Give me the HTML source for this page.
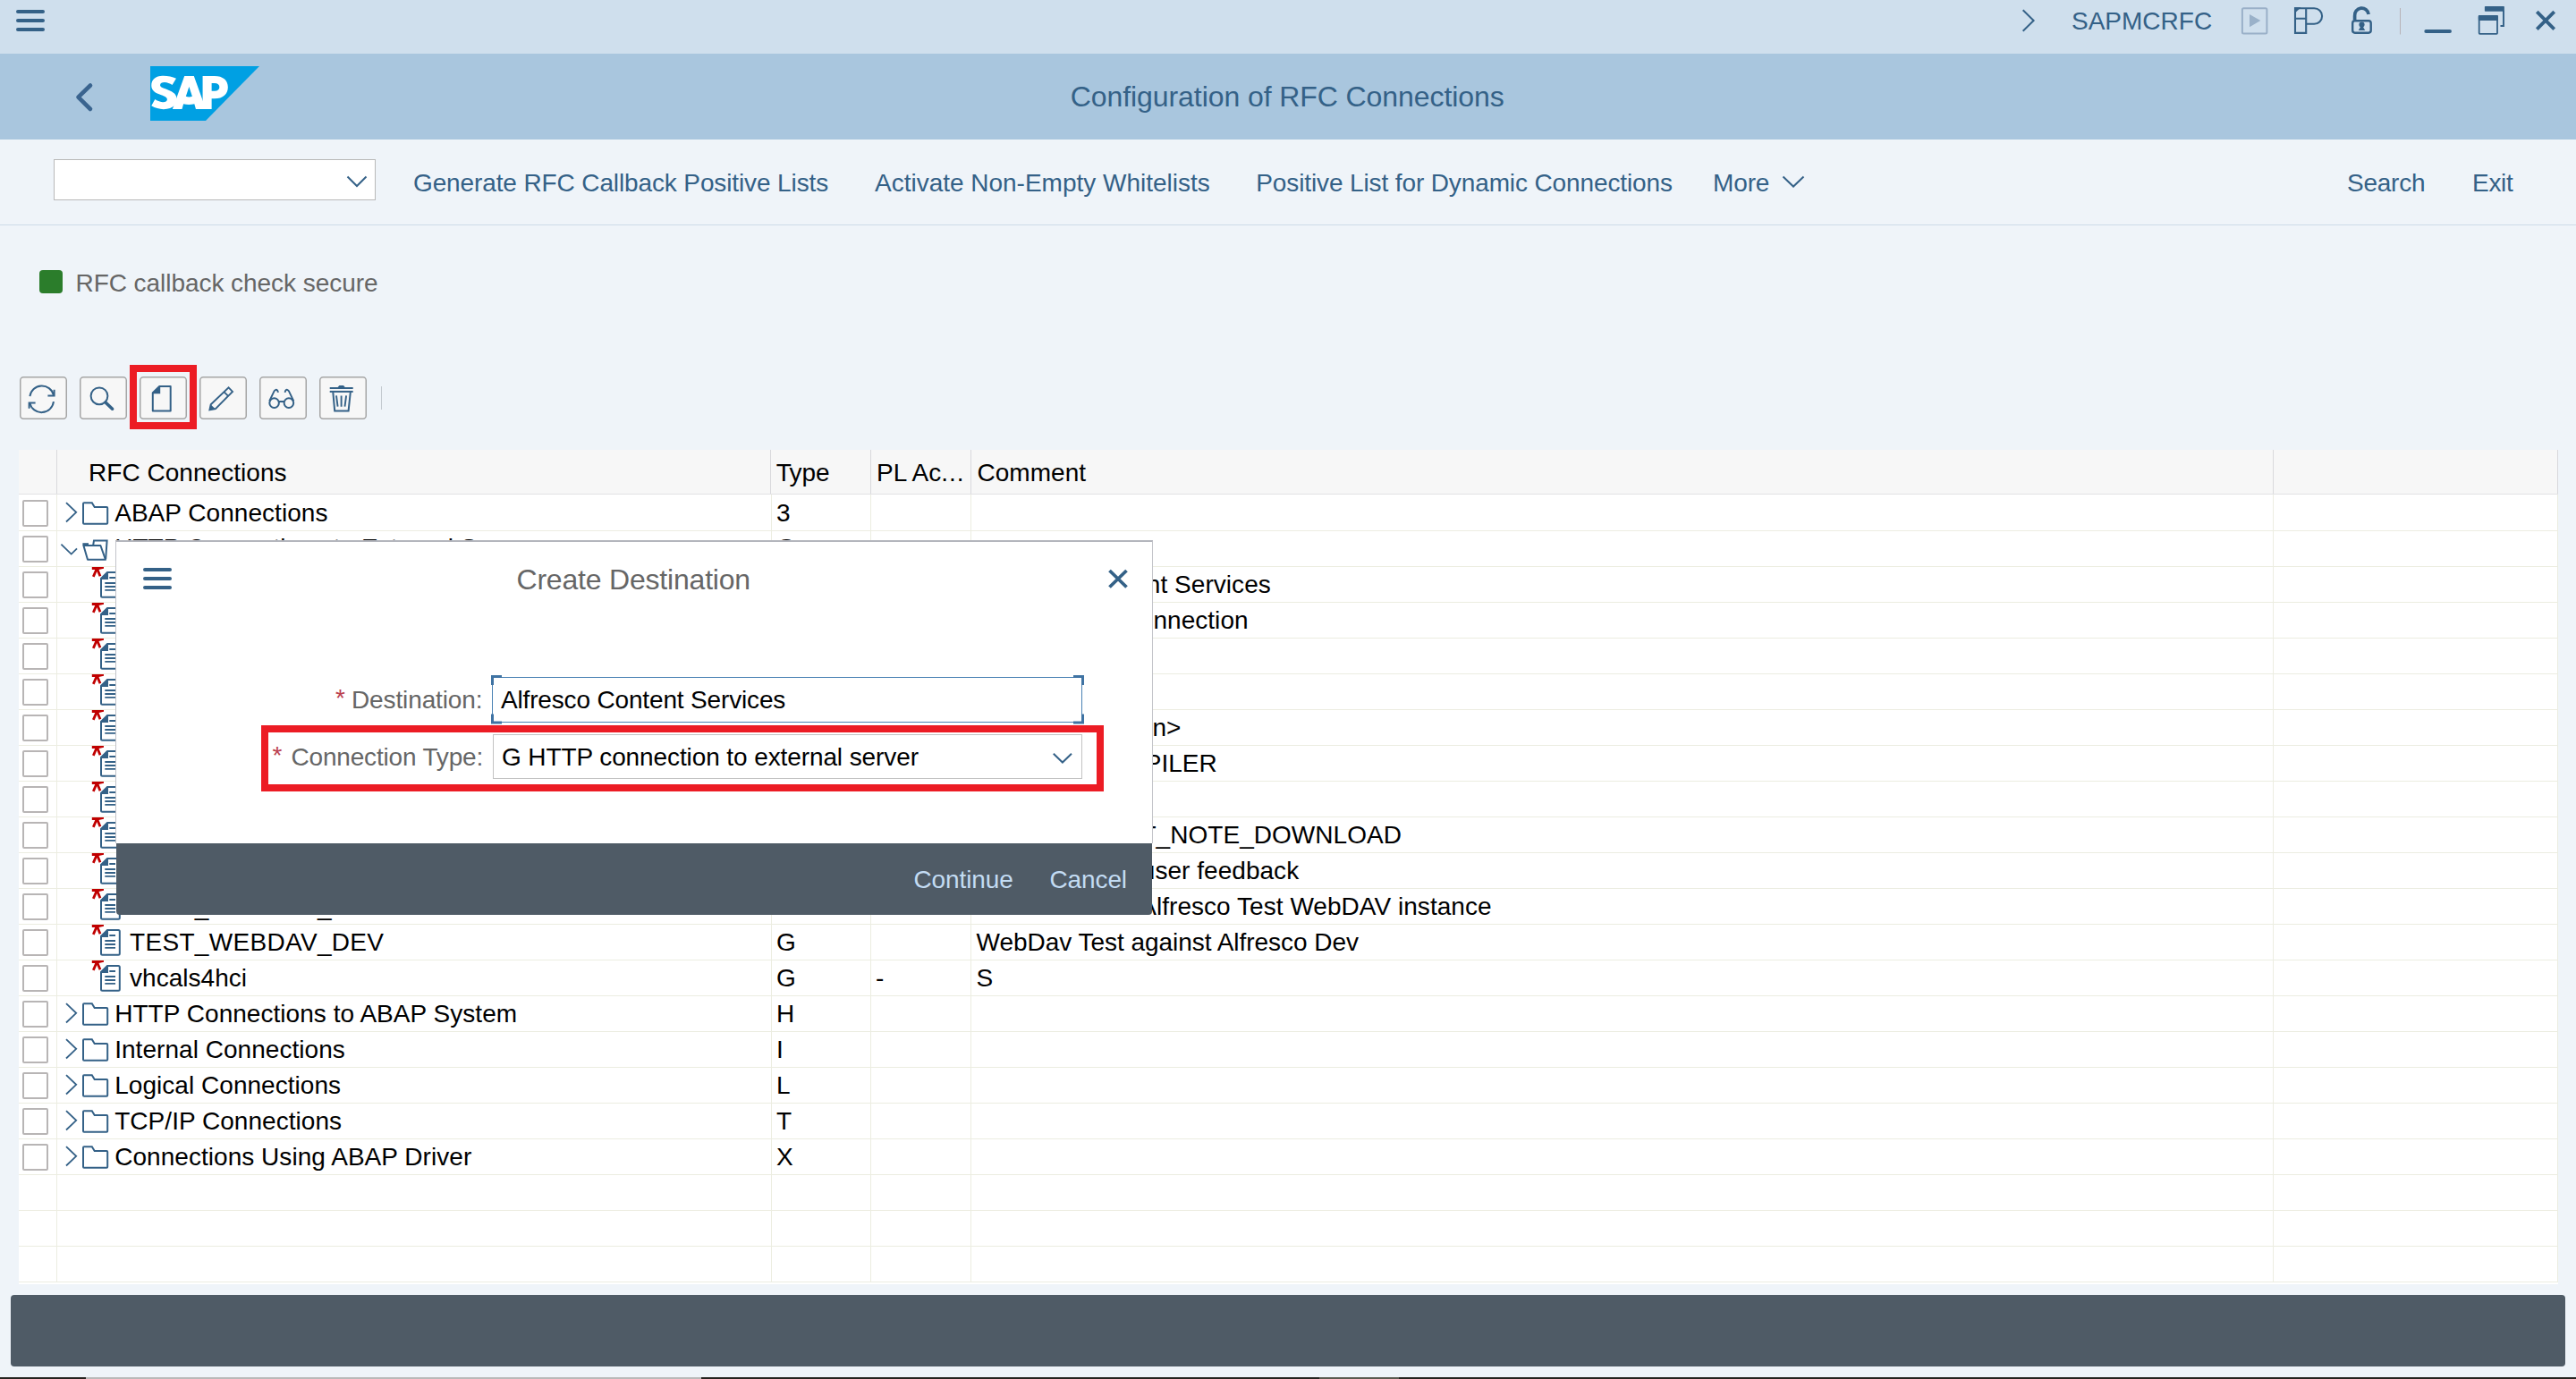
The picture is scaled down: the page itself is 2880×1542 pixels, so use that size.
<!DOCTYPE html>
<html><head><meta charset="utf-8"><title>Configuration of RFC Connections</title>
<style>
html,body{margin:0;padding:0}
body{width:2880px;height:1542px;position:relative;overflow:hidden;background:#eff4f9;font-family:"Liberation Sans",sans-serif}
.a{position:absolute}
.t{position:absolute;white-space:pre;line-height:1;font-family:"Liberation Sans",sans-serif}
svg{position:absolute;overflow:visible}
.btn{position:absolute;top:421px;width:50px;height:45px;border:1.5px solid #a8a8a8;border-radius:4px;background:#f7f7f7;box-sizing:content-box}
.cb{position:absolute;left:25px;width:25px;height:26px;border:2px solid #b8b5b5;border-radius:2px;background:#fff}
.hl{position:absolute;left:21px;width:2839px;height:1px;background:#ecede1}
.vl{position:absolute;top:553px;width:1px;height:881px;background:#ecede1}
.hvl{position:absolute;top:503px;width:1px;height:49px;background:#d9d9dc}
</style></head><body>

<div class="a" style="left:0;top:0;width:2880px;height:60px;background:#cfdfed"></div>
<div class="a" style="left:18px;top:11px;width:32px;height:4px;border-radius:2px;background:#346187"></div>
<div class="a" style="left:18px;top:21px;width:32px;height:4px;border-radius:2px;background:#346187"></div>
<div class="a" style="left:18px;top:31px;width:32px;height:4px;border-radius:2px;background:#346187"></div>
<div class="a" style="left:0;top:60px;width:2880px;height:96px;background:#a9c6de"></div>
<svg style="left:0;top:0" width="2880" height="160"><polyline points="101,95.5 87.5,108.7 101,122" fill="none" stroke="#3a648f" stroke-width="4.6" stroke-linecap="round" stroke-linejoin="round"/><polygon points="168,74 290,74 230,135 168,135" fill="#00a0e3"/><g transform="translate(160,70) scale(0.054348)" fill="#fff" fill-rule="evenodd"><path d="M680,325 C600,290 500,270 400,272 C260,275 170,350 170,470 C170,570 240,620 340,655 C430,690 495,710 495,760 C495,800 450,815 400,812 C340,808 290,785 245,755 L170,890 C250,935 330,960 420,960 C520,960 600,930 650,870 C690,820 700,750 680,690 C660,630 590,590 500,555 C420,525 350,510 350,465 C350,425 390,405 440,405 C500,405 550,430 600,460 Z"/><path d="M850,275 L1045,275 L1290,955 L1085,955 L1055,850 Q940,875 830,850 L800,955 L605,955 Z M945,495 L1010,695 Q945,725 880,695 Z"/><path d="M1225,275 H1470 C1640,275 1745,360 1745,505 C1745,650 1640,740 1470,740 H1410 V955 H1225 Z M1410,425 H1470 C1535,425 1570,455 1570,503 C1570,555 1535,585 1470,585 H1410 Z"/></g></svg>
<div class="t" style="left:1196.8px;top:91.51px;font-size:32px;color:#346187;letter-spacing:-0.08px;">Configuration of RFC Connections</div>
<div class="t" style="left:2316px;top:10.00px;font-size:28px;color:#346187;letter-spacing:0px;">SAPMCRFC</div>
<svg style="left:0;top:0" width="2880" height="60" fill="none" stroke="#346187">
<polyline points="2261.7,11.3 2273.6,23 2261.7,34.8" stroke-width="2"/>
<rect x="2506.9" y="9.2" width="27.5" height="28.2" rx="1.5" stroke="#9ab0c8" stroke-width="2"/>
<polygon points="2515,15.9 2527.3,23.1 2515,30.3" fill="#9ab1c9" stroke="none"/>
<path d="M2566,9.2 H2587.3 A8.8,8.8 0 0 1 2587.3,26.8 H2578.2 V36.9 H2566 Z M2578.2,9.2 V26.8 M2566,20.8 H2578.2" stroke-width="2.1"/>
<polygon points="2565,8.2 2572.6,8.2 2565,15.3" fill="#346187" stroke="none"/>
<rect x="2630.2" y="23.3" width="20.5" height="13.4" rx="2.6" stroke-width="2.4"/>
<path d="M2632.6,22.6 V17.8 A7.8,7.8 0 0 1 2648.1,16" stroke-width="3.7"/>
<circle cx="2640.5" cy="27.6" r="3.1" fill="#346187" stroke="none"/><polygon points="2639.6,29 2641.4,29 2644.2,33.9 2636.8,33.9" fill="#346187" stroke="none"/>
<line x1="2683.5" y1="9" x2="2683.5" y2="38.5" stroke="#b7b2b6" stroke-width="1"/>
<line x1="2712.3" y1="35" x2="2739" y2="35" stroke-width="3.9" stroke-linecap="round"/>
<rect x="2771.7" y="18" width="20.3" height="19.8" rx="0.8" stroke-width="1.8"/><rect x="2770.8" y="17.1" width="22.1" height="5.8" rx="0.8" fill="#346187" stroke="none"/>
<rect x="2777.9" y="7" width="22" height="5.7" rx="0.8" fill="#346187" stroke="none"/><path d="M2799,12 V29 H2795.5" stroke-width="1.9"/>
<path d="M2836.3,13.2 L2855.7,32.7 M2855.7,13.2 L2836.3,32.7" stroke-width="3.8"/>
</svg>
<div class="a" style="left:0;top:251px;width:2880px;height:1px;background:#cddbe9"></div>
<div class="a" style="left:60px;top:178px;width:358px;height:44px;border:1.5px solid #b9b9b9;background:#fff"></div>
<svg style="left:0;top:0" width="2880" height="260" fill="none" stroke="#346187" stroke-width="2"><polyline points="388.5,197.5 399,208 409.5,197.5"/><polyline points="1993.5,197.5 2005,208.5 2016.5,197.5"/></svg>
<div class="t" style="left:462px;top:191.00px;font-size:28px;color:#346187;letter-spacing:-0.12px;">Generate RFC Callback Positive Lists</div>
<div class="t" style="left:978px;top:191.00px;font-size:28px;color:#346187;letter-spacing:-0.01px;">Activate Non-Empty Whitelists</div>
<div class="t" style="left:1404.3px;top:191.00px;font-size:28px;color:#346187;letter-spacing:-0.12px;">Positive List for Dynamic Connections</div>
<div class="t" style="left:1915px;top:191.00px;font-size:28px;color:#346187;letter-spacing:-0.12px;">More</div>
<div class="t" style="left:2624px;top:191.00px;font-size:28px;color:#346187;letter-spacing:-0.25px;">Search</div>
<div class="t" style="left:2764px;top:191.00px;font-size:28px;color:#346187;letter-spacing:-0.3px;">Exit</div>
<div class="a" style="left:44.4px;top:302px;width:26px;height:26px;border-radius:4px;background:#2b7d2b"></div>
<div class="t" style="left:84.5px;top:303.40px;font-size:28px;color:#666;letter-spacing:-0.05px;">RFC callback check secure</div>
<svg style="left:0;top:0" width="440" height="480"><rect x="22.75" y="421.75" width="51.5" height="46.5" rx="3.5" fill="#f7f7f7" stroke="#a6a6a6" stroke-width="1.5"/><rect x="89.75" y="421.75" width="51.5" height="46.5" rx="3.5" fill="#f7f7f7" stroke="#a6a6a6" stroke-width="1.5"/><rect x="156.75" y="421.75" width="51.5" height="46.5" rx="3.5" fill="#f7f7f7" stroke="#a6a6a6" stroke-width="1.5"/><rect x="223.75" y="421.75" width="51.5" height="46.5" rx="3.5" fill="#f7f7f7" stroke="#a6a6a6" stroke-width="1.5"/><rect x="290.75" y="421.75" width="51.5" height="46.5" rx="3.5" fill="#f7f7f7" stroke="#a6a6a6" stroke-width="1.5"/><rect x="357.75" y="421.75" width="51.5" height="46.5" rx="3.5" fill="#f7f7f7" stroke="#a6a6a6" stroke-width="1.5"/></svg>
<div class="a" style="left:426px;top:432px;width:1px;height:26px;background:#c3c9cf"></div>
<svg style="left:0;top:0" width="440" height="480" fill="none" stroke="#346187" stroke-width="2"><path d="M33.4,443.2 A13.5,13.5 0 0 1 59.9,441.8" /><path d="M60.6,435.8 V442.4 H53.4" stroke-width="2"/><path d="M59.9,449 A13.5,13.5 0 0 1 33.3,450.6" /><path d="M32.6,456.8 V450.4 H39.6" stroke-width="2"/><circle cx="111" cy="442.8" r="9.4" stroke-width="2"/><line x1="118" y1="450" x2="125.6" y2="457.2" stroke-width="3.6" stroke-linecap="round"/><path d="M178,432.1 H190.7 V459.6 H170.8 V439.2 Z" stroke-linejoin="round"/><polygon points="170.8,439.2 178,432.1 179.2,432.1 179.2,440.3 170.8,440.3" fill="#346187" stroke="none"/><path d="M255.6,433.4 L260,437.9 L241,457.2 L234.4,458.4 L235.7,452.2 Z" stroke-width="1.9" stroke-linejoin="miter"/><line x1="250.6" y1="438.3" x2="255.2" y2="442.9" stroke-width="1.9"/><polygon points="235.7,452.4 240.8,457.2 234.3,458.5" fill="#346187" stroke="none"/><circle cx="306.6" cy="450.6" r="5.3" stroke-width="2"/><circle cx="322.9" cy="450.6" r="5.3" stroke-width="2"/><line x1="311.8" y1="449" x2="317.7" y2="449" stroke-width="2"/><path d="M301.2,448.5 L306.4,437.6 Q308.3,434.6 310.2,436.6 Q310.9,437.6 310.7,438.9" stroke-width="1.9"/><path d="M328.3,448.5 L323.1,437.6 Q321.2,434.6 319.3,436.6 Q318.6,437.6 318.8,438.9" stroke-width="1.9"/><polygon points="377.4,433.2 379.4,431.1 384,431.1 386,433.2" fill="#346187" stroke="none"/><line x1="368.7" y1="434" x2="394.7" y2="434" stroke-width="2"/><line x1="368.7" y1="437.9" x2="394.7" y2="437.9" stroke-width="2"/><path d="M372.3,438.5 L374.2,459.4 H389.6 L391.8,438.5" stroke-width="2"/><path d="M376,442.4 L377.6,454.7 M381.6,442.4 V454.7 M387.1,442.4 L385.5,454.7" stroke-width="1.9"/></svg>
<div class="a" style="left:145px;top:408px;width:59px;height:56px;border:8px solid #ec1c24"></div>
<div class="a" style="left:21px;top:503px;width:2839px;height:933px;background:#fff"></div>
<div class="a" style="left:21px;top:503px;width:2839px;height:49px;background:#f7f7f7"></div>
<div class="a" style="left:21px;top:552px;width:2839px;height:1.2px;background:#e2e2e4"></div>
<div class="vl" style="left:63px"></div>
<div class="hvl" style="left:63px"></div>
<div class="vl" style="left:862px"></div>
<div class="hvl" style="left:861px"></div>
<div class="vl" style="left:973px"></div>
<div class="hvl" style="left:973px"></div>
<div class="vl" style="left:1085px"></div>
<div class="hvl" style="left:1085px"></div>
<div class="vl" style="left:2541px"></div>
<div class="hvl" style="left:2541px"></div>
<div class="vl" style="left:2859px"></div>
<div class="hvl" style="left:2859px"></div>
<div class="hl" style="top:593px"></div>
<div class="hl" style="top:633px"></div>
<div class="hl" style="top:673px"></div>
<div class="hl" style="top:713px"></div>
<div class="hl" style="top:753px"></div>
<div class="hl" style="top:793px"></div>
<div class="hl" style="top:833px"></div>
<div class="hl" style="top:873px"></div>
<div class="hl" style="top:913px"></div>
<div class="hl" style="top:953px"></div>
<div class="hl" style="top:993px"></div>
<div class="hl" style="top:1033px"></div>
<div class="hl" style="top:1073px"></div>
<div class="hl" style="top:1113px"></div>
<div class="hl" style="top:1153px"></div>
<div class="hl" style="top:1193px"></div>
<div class="hl" style="top:1233px"></div>
<div class="hl" style="top:1273px"></div>
<div class="hl" style="top:1313px"></div>
<div class="hl" style="top:1353px"></div>
<div class="hl" style="top:1393px"></div>
<div class="hl" style="top:1433px"></div>
<div class="t" style="left:99px;top:514.90px;font-size:28px;color:#000;letter-spacing:0.04px;">RFC Connections</div>
<div class="t" style="left:867.7px;top:514.90px;font-size:28px;color:#000;letter-spacing:0.04px;"><span style="letter-spacing:-2.4px">T</span>ype</div>
<div class="t" style="left:980px;top:514.90px;font-size:28px;color:#000;letter-spacing:0.04px;">PL Ac<span style="letter-spacing:.9px">...</span></div>
<div class="t" style="left:1092.5px;top:514.90px;font-size:28px;color:#000;letter-spacing:0.04px;">Comment</div>
<svg style="left:0;top:0" width="200" height="1440" fill="none" stroke="#346187"><g><polyline points="74,562.1 85.2,572.8 74,583.5" stroke-width="1.8"/><path d="M93,563.2 Q93,562.2 94,562.2 H102.8 L105.7,567 H119.2 Q120.2,567 120.2,568 V584.8 Q120.2,585.8 119.2,585.8 H94 Q93,585.8 93,584.8 Z" fill="#fff" stroke-width="2"/><polyline points="68.4,608.7 79.7,619.6 86,613.4" stroke-width="1.8"/><path d="M104.2,609.5 L105,604.4 H119.6 L118.2,625" stroke-width="2"/><path d="M93.4,610 H112.4 L118,625.8 H98 Z" fill="#fff" stroke-width="2" stroke-linejoin="round"/><rect x="92.4" y="607.2" width="6.6" height="2.6" fill="#346187" stroke="none"/><polygon points="102.8,634 116,634 116,635.7 110.5,636.9 102.8,636.9" fill="#c00000" stroke="none"/><path d="M108.2,636 L104.3,644.9 M108.6,636 L112,644.3" stroke="#c00000" stroke-width="2.8"/><path d="M120,640 H132.3 Q133.8,640 133.8,641.5 V666.3 Q133.8,667.8 132.3,667.8 H114.5 Q113,667.8 113,666.3 V647 Z" fill="#fff" stroke-width="2"/><polygon points="113,647 120,640 121,640 121,648 113,648" fill="#346187" stroke="none"/><path d="M122.3,646 H129 M117.3,652 H129 M117.3,656 H129 M117.3,659.9 H129" stroke-width="1.8"/><polygon points="102.8,674 116,674 116,675.7 110.5,676.9 102.8,676.9" fill="#c00000" stroke="none"/><path d="M108.2,676 L104.3,684.9 M108.6,676 L112,684.3" stroke="#c00000" stroke-width="2.8"/><path d="M120,680 H132.3 Q133.8,680 133.8,681.5 V706.3 Q133.8,707.8 132.3,707.8 H114.5 Q113,707.8 113,706.3 V687 Z" fill="#fff" stroke-width="2"/><polygon points="113,687 120,680 121,680 121,688 113,688" fill="#346187" stroke="none"/><path d="M122.3,686 H129 M117.3,692 H129 M117.3,696 H129 M117.3,699.9 H129" stroke-width="1.8"/><polygon points="102.8,714 116,714 116,715.7 110.5,716.9 102.8,716.9" fill="#c00000" stroke="none"/><path d="M108.2,716 L104.3,724.9 M108.6,716 L112,724.3" stroke="#c00000" stroke-width="2.8"/><path d="M120,720 H132.3 Q133.8,720 133.8,721.5 V746.3 Q133.8,747.8 132.3,747.8 H114.5 Q113,747.8 113,746.3 V727 Z" fill="#fff" stroke-width="2"/><polygon points="113,727 120,720 121,720 121,728 113,728" fill="#346187" stroke="none"/><path d="M122.3,726 H129 M117.3,732 H129 M117.3,736 H129 M117.3,739.9 H129" stroke-width="1.8"/><polygon points="102.8,754 116,754 116,755.7 110.5,756.9 102.8,756.9" fill="#c00000" stroke="none"/><path d="M108.2,756 L104.3,764.9 M108.6,756 L112,764.3" stroke="#c00000" stroke-width="2.8"/><path d="M120,760 H132.3 Q133.8,760 133.8,761.5 V786.3 Q133.8,787.8 132.3,787.8 H114.5 Q113,787.8 113,786.3 V767 Z" fill="#fff" stroke-width="2"/><polygon points="113,767 120,760 121,760 121,768 113,768" fill="#346187" stroke="none"/><path d="M122.3,766 H129 M117.3,772 H129 M117.3,776 H129 M117.3,779.9 H129" stroke-width="1.8"/><polygon points="102.8,794 116,794 116,795.7 110.5,796.9 102.8,796.9" fill="#c00000" stroke="none"/><path d="M108.2,796 L104.3,804.9 M108.6,796 L112,804.3" stroke="#c00000" stroke-width="2.8"/><path d="M120,800 H132.3 Q133.8,800 133.8,801.5 V826.3 Q133.8,827.8 132.3,827.8 H114.5 Q113,827.8 113,826.3 V807 Z" fill="#fff" stroke-width="2"/><polygon points="113,807 120,800 121,800 121,808 113,808" fill="#346187" stroke="none"/><path d="M122.3,806 H129 M117.3,812 H129 M117.3,816 H129 M117.3,819.9 H129" stroke-width="1.8"/><polygon points="102.8,834 116,834 116,835.7 110.5,836.9 102.8,836.9" fill="#c00000" stroke="none"/><path d="M108.2,836 L104.3,844.9 M108.6,836 L112,844.3" stroke="#c00000" stroke-width="2.8"/><path d="M120,840 H132.3 Q133.8,840 133.8,841.5 V866.3 Q133.8,867.8 132.3,867.8 H114.5 Q113,867.8 113,866.3 V847 Z" fill="#fff" stroke-width="2"/><polygon points="113,847 120,840 121,840 121,848 113,848" fill="#346187" stroke="none"/><path d="M122.3,846 H129 M117.3,852 H129 M117.3,856 H129 M117.3,859.9 H129" stroke-width="1.8"/><polygon points="102.8,874 116,874 116,875.7 110.5,876.9 102.8,876.9" fill="#c00000" stroke="none"/><path d="M108.2,876 L104.3,884.9 M108.6,876 L112,884.3" stroke="#c00000" stroke-width="2.8"/><path d="M120,880 H132.3 Q133.8,880 133.8,881.5 V906.3 Q133.8,907.8 132.3,907.8 H114.5 Q113,907.8 113,906.3 V887 Z" fill="#fff" stroke-width="2"/><polygon points="113,887 120,880 121,880 121,888 113,888" fill="#346187" stroke="none"/><path d="M122.3,886 H129 M117.3,892 H129 M117.3,896 H129 M117.3,899.9 H129" stroke-width="1.8"/><polygon points="102.8,914 116,914 116,915.7 110.5,916.9 102.8,916.9" fill="#c00000" stroke="none"/><path d="M108.2,916 L104.3,924.9 M108.6,916 L112,924.3" stroke="#c00000" stroke-width="2.8"/><path d="M120,920 H132.3 Q133.8,920 133.8,921.5 V946.3 Q133.8,947.8 132.3,947.8 H114.5 Q113,947.8 113,946.3 V927 Z" fill="#fff" stroke-width="2"/><polygon points="113,927 120,920 121,920 121,928 113,928" fill="#346187" stroke="none"/><path d="M122.3,926 H129 M117.3,932 H129 M117.3,936 H129 M117.3,939.9 H129" stroke-width="1.8"/><polygon points="102.8,954 116,954 116,955.7 110.5,956.9 102.8,956.9" fill="#c00000" stroke="none"/><path d="M108.2,956 L104.3,964.9 M108.6,956 L112,964.3" stroke="#c00000" stroke-width="2.8"/><path d="M120,960 H132.3 Q133.8,960 133.8,961.5 V986.3 Q133.8,987.8 132.3,987.8 H114.5 Q113,987.8 113,986.3 V967 Z" fill="#fff" stroke-width="2"/><polygon points="113,967 120,960 121,960 121,968 113,968" fill="#346187" stroke="none"/><path d="M122.3,966 H129 M117.3,972 H129 M117.3,976 H129 M117.3,979.9 H129" stroke-width="1.8"/><polygon points="102.8,994 116,994 116,995.7 110.5,996.9 102.8,996.9" fill="#c00000" stroke="none"/><path d="M108.2,996 L104.3,1004.9 M108.6,996 L112,1004.3" stroke="#c00000" stroke-width="2.8"/><path d="M120,1000 H132.3 Q133.8,1000 133.8,1001.5 V1026.3 Q133.8,1027.8 132.3,1027.8 H114.5 Q113,1027.8 113,1026.3 V1007 Z" fill="#fff" stroke-width="2"/><polygon points="113,1007 120,1000 121,1000 121,1008 113,1008" fill="#346187" stroke="none"/><path d="M122.3,1006 H129 M117.3,1012 H129 M117.3,1016 H129 M117.3,1019.9 H129" stroke-width="1.8"/><polygon points="102.8,1034 116,1034 116,1035.7 110.5,1036.9 102.8,1036.9" fill="#c00000" stroke="none"/><path d="M108.2,1036 L104.3,1044.9 M108.6,1036 L112,1044.3" stroke="#c00000" stroke-width="2.8"/><path d="M120,1040 H132.3 Q133.8,1040 133.8,1041.5 V1066.3 Q133.8,1067.8 132.3,1067.8 H114.5 Q113,1067.8 113,1066.3 V1047 Z" fill="#fff" stroke-width="2"/><polygon points="113,1047 120,1040 121,1040 121,1048 113,1048" fill="#346187" stroke="none"/><path d="M122.3,1046 H129 M117.3,1052 H129 M117.3,1056 H129 M117.3,1059.9 H129" stroke-width="1.8"/><polygon points="102.8,1074 116,1074 116,1075.7 110.5,1076.9 102.8,1076.9" fill="#c00000" stroke="none"/><path d="M108.2,1076 L104.3,1084.9 M108.6,1076 L112,1084.3" stroke="#c00000" stroke-width="2.8"/><path d="M120,1080 H132.3 Q133.8,1080 133.8,1081.5 V1106.3 Q133.8,1107.8 132.3,1107.8 H114.5 Q113,1107.8 113,1106.3 V1087 Z" fill="#fff" stroke-width="2"/><polygon points="113,1087 120,1080 121,1080 121,1088 113,1088" fill="#346187" stroke="none"/><path d="M122.3,1086 H129 M117.3,1092 H129 M117.3,1096 H129 M117.3,1099.9 H129" stroke-width="1.8"/><polyline points="74,1122.1 85.2,1132.8 74,1143.5" stroke-width="1.8"/><path d="M93,1123.2 Q93,1122.2 94,1122.2 H102.8 L105.7,1127 H119.2 Q120.2,1127 120.2,1128 V1144.8 Q120.2,1145.8 119.2,1145.8 H94 Q93,1145.8 93,1144.8 Z" fill="#fff" stroke-width="2"/><polyline points="74,1162.1 85.2,1172.8 74,1183.5" stroke-width="1.8"/><path d="M93,1163.2 Q93,1162.2 94,1162.2 H102.8 L105.7,1167 H119.2 Q120.2,1167 120.2,1168 V1184.8 Q120.2,1185.8 119.2,1185.8 H94 Q93,1185.8 93,1184.8 Z" fill="#fff" stroke-width="2"/><polyline points="74,1202.1 85.2,1212.8 74,1223.5" stroke-width="1.8"/><path d="M93,1203.2 Q93,1202.2 94,1202.2 H102.8 L105.7,1207 H119.2 Q120.2,1207 120.2,1208 V1224.8 Q120.2,1225.8 119.2,1225.8 H94 Q93,1225.8 93,1224.8 Z" fill="#fff" stroke-width="2"/><polyline points="74,1242.1 85.2,1252.8 74,1263.5" stroke-width="1.8"/><path d="M93,1243.2 Q93,1242.2 94,1242.2 H102.8 L105.7,1247 H119.2 Q120.2,1247 120.2,1248 V1264.8 Q120.2,1265.8 119.2,1265.8 H94 Q93,1265.8 93,1264.8 Z" fill="#fff" stroke-width="2"/><polyline points="74,1282.1 85.2,1292.8 74,1303.5" stroke-width="1.8"/><path d="M93,1283.2 Q93,1282.2 94,1282.2 H102.8 L105.7,1287 H119.2 Q120.2,1287 120.2,1288 V1304.8 Q120.2,1305.8 119.2,1305.8 H94 Q93,1305.8 93,1304.8 Z" fill="#fff" stroke-width="2"/></g></svg>
<div class="cb" style="top:559px"></div>
<div class="t" style="left:128.2px;top:560.20px;font-size:28px;color:#000;letter-spacing:0.04px;">ABAP Connections</div>
<div class="t" style="left:868px;top:560.20px;font-size:28px;color:#000;letter-spacing:0.04px;">3</div>
<div class="cb" style="top:599px"></div>
<div class="t" style="left:128.2px;top:599.20px;font-size:28px;color:#000;letter-spacing:0.04px;">HTTP Connections to External Server</div>
<div class="t" style="left:868px;top:599.20px;font-size:28px;color:#000;letter-spacing:0.04px;">G</div>
<div class="cb" style="top:639px"></div>
<div class="t" style="left:145px;top:640.20px;font-size:28px;color:#000;letter-spacing:0.04px;"></div>
<div class="t" style="left:868px;top:640.20px;font-size:28px;color:#000;letter-spacing:0.04px;">G</div>
<div class="t" style="right:1459.2px;top:640.20px;font-size:28px;color:#000;letter-spacing:0.04px;">Alfresco Content Services</div>
<div class="cb" style="top:679px"></div>
<div class="t" style="left:145px;top:680.20px;font-size:28px;color:#000;letter-spacing:0.04px;"></div>
<div class="t" style="left:868px;top:680.20px;font-size:28px;color:#000;letter-spacing:0.04px;">G</div>
<div class="t" style="right:1484.4px;top:680.20px;font-size:28px;color:#000;letter-spacing:0.04px;">HTTP Connection</div>
<div class="cb" style="top:719px"></div>
<div class="t" style="left:145px;top:720.20px;font-size:28px;color:#000;letter-spacing:0.04px;"></div>
<div class="t" style="left:868px;top:720.20px;font-size:28px;color:#000;letter-spacing:0.04px;">G</div>
<div class="cb" style="top:759px"></div>
<div class="t" style="left:145px;top:760.20px;font-size:28px;color:#000;letter-spacing:0.04px;"></div>
<div class="t" style="left:868px;top:760.20px;font-size:28px;color:#000;letter-spacing:0.04px;">G</div>
<div class="cb" style="top:799px"></div>
<div class="t" style="left:145px;top:800.20px;font-size:28px;color:#000;letter-spacing:0.04px;"></div>
<div class="t" style="left:868px;top:800.20px;font-size:28px;color:#000;letter-spacing:0.04px;">G</div>
<div class="t" style="right:1559.6px;top:800.20px;font-size:28px;color:#000;letter-spacing:0.04px;">&lt;description&gt;</div>
<div class="cb" style="top:839px"></div>
<div class="t" style="left:145px;top:840.20px;font-size:28px;color:#000;letter-spacing:0.04px;"></div>
<div class="t" style="left:868px;top:840.20px;font-size:28px;color:#000;letter-spacing:0.04px;">G</div>
<div class="t" style="right:1519.2px;top:840.20px;font-size:28px;color:#000;letter-spacing:0.04px;">ABAP COMPILER</div>
<div class="cb" style="top:879px"></div>
<div class="t" style="left:145px;top:880.20px;font-size:28px;color:#000;letter-spacing:0.04px;"></div>
<div class="t" style="left:868px;top:880.20px;font-size:28px;color:#000;letter-spacing:0.04px;">G</div>
<div class="cb" style="top:919px"></div>
<div class="t" style="left:145px;top:920.20px;font-size:28px;color:#000;letter-spacing:0.04px;"></div>
<div class="t" style="left:868px;top:920.20px;font-size:28px;color:#000;letter-spacing:0.04px;">G</div>
<div class="t" style="right:1313px;top:920.20px;font-size:28px;color:#000;letter-spacing:0.04px;">SAP-SUPPORT_NOTE_DOWNLOAD</div>
<div class="cb" style="top:959px"></div>
<div class="t" style="left:145px;top:960.20px;font-size:28px;color:#000;letter-spacing:0.04px;"></div>
<div class="t" style="left:868px;top:960.20px;font-size:28px;color:#000;letter-spacing:0.04px;">G</div>
<div class="t" style="right:1427.8px;top:960.20px;font-size:28px;color:#000;letter-spacing:0.04px;">Destination for user feedback</div>
<div class="cb" style="top:999px"></div>
<div class="t" style="left:145px;top:1000.20px;font-size:28px;color:#000;letter-spacing:0.04px;"><span style="letter-spacing:.32px">TEST_WEBDAV_ALF</span></div>
<div class="t" style="left:868px;top:1000.20px;font-size:28px;color:#000;letter-spacing:0.04px;">G</div>
<div class="t" style="right:1212.4px;top:1000.20px;font-size:28px;color:#000;letter-spacing:0.04px;">Connection to Alfresco Test WebDAV instance</div>
<div class="cb" style="top:1039px"></div>
<div class="t" style="left:145px;top:1040.20px;font-size:28px;color:#000;letter-spacing:0.04px;"><span style="letter-spacing:.32px">TEST_WEBDAV_DEV</span></div>
<div class="t" style="left:868px;top:1040.20px;font-size:28px;color:#000;letter-spacing:0.04px;">G</div>
<div class="t" style="left:1091.5px;top:1040.20px;font-size:28px;color:#000;letter-spacing:0.04px;"><span style="letter-spacing:-.03px">WebDav Test against Alfresco Dev</span></div>
<div class="cb" style="top:1079px"></div>
<div class="t" style="left:145px;top:1080.20px;font-size:28px;color:#000;letter-spacing:0.04px;">vhcals4hci</div>
<div class="t" style="left:868px;top:1080.20px;font-size:28px;color:#000;letter-spacing:0.04px;">G</div>
<div class="t" style="left:979px;top:1080.20px;font-size:28px;color:#000;letter-spacing:0.04px;">-</div>
<div class="t" style="left:1091.5px;top:1080.20px;font-size:28px;color:#000;letter-spacing:0.04px;">S</div>
<div class="cb" style="top:1119px"></div>
<div class="t" style="left:128.2px;top:1120.20px;font-size:28px;color:#000;letter-spacing:0.04px;">HTTP Connections to ABAP System</div>
<div class="t" style="left:868px;top:1120.20px;font-size:28px;color:#000;letter-spacing:0.04px;">H</div>
<div class="cb" style="top:1159px"></div>
<div class="t" style="left:128.2px;top:1160.20px;font-size:28px;color:#000;letter-spacing:0.04px;">Internal Connections</div>
<div class="t" style="left:868px;top:1160.20px;font-size:28px;color:#000;letter-spacing:0.04px;">I</div>
<div class="cb" style="top:1199px"></div>
<div class="t" style="left:128.2px;top:1200.20px;font-size:28px;color:#000;letter-spacing:0.04px;">Logical Connections</div>
<div class="t" style="left:868px;top:1200.20px;font-size:28px;color:#000;letter-spacing:0.04px;">L</div>
<div class="cb" style="top:1239px"></div>
<div class="t" style="left:128.2px;top:1240.20px;font-size:28px;color:#000;letter-spacing:0.04px;">TCP/IP Connections</div>
<div class="t" style="left:868px;top:1240.20px;font-size:28px;color:#000;letter-spacing:0.04px;">T</div>
<div class="cb" style="top:1279px"></div>
<div class="t" style="left:128.2px;top:1280.20px;font-size:28px;color:#000;letter-spacing:0.04px;">Connections Using ABAP Driver</div>
<div class="t" style="left:868px;top:1280.20px;font-size:28px;color:#000;letter-spacing:0.04px;">X</div>
<div class="a" style="left:129px;top:604px;width:1159.5px;height:419px">
<div class="a" style="left:0;top:0;right:0;height:339px;background:#fff;border:1px solid #c3c4ca;border-top:2px solid #b4b6bd;border-bottom:none;box-sizing:border-box"></div>
<div class="a" style="left:1px;top:339px;width:1158px;height:80px;background:#4f5b66;border-radius:0 0 4px 4px"></div></div>
<div class="a" style="left:160px;top:635px;width:32px;height:4px;border-radius:2px;background:#346187"></div>
<div class="a" style="left:160px;top:645px;width:32px;height:4px;border-radius:2px;background:#346187"></div>
<div class="a" style="left:160px;top:655px;width:32px;height:4px;border-radius:2px;background:#346187"></div>
<div class="t" style="left:577.5px;top:631.61px;font-size:32px;color:#666;letter-spacing:-0.2px;">Create Destination</div>
<svg style="left:0;top:0" width="2880" height="1100" fill="none" stroke="#346187"><path d="M1240.5,638 l19,18.5 M1259.5,638 l-19,18.5" stroke-width="3.8"/></svg>
<div class="t" style="left:375px;top:767.20px;font-size:28px;color:#bb3f4f;letter-spacing:-0.12px;">*</div>
<div class="t" style="left:393px;top:769.20px;font-size:28px;color:#666;letter-spacing:-0.12px;">Destination:</div>
<div class="a" style="left:550px;top:757px;width:658px;height:49px;border:1.5px solid #4a82b4;background:#fff"></div>
<svg style="left:0;top:0" width="2880" height="1100"><path d="M561,756.5 H550.5 V766" fill="none" stroke="#3f73a3" stroke-width="3"/></svg>
<svg style="left:0;top:0" width="2880" height="1100"><path d="M1200,756.5 H1210.5 V766" fill="none" stroke="#3f73a3" stroke-width="3"/></svg>
<svg style="left:0;top:0" width="2880" height="1100"><path d="M561,808.0 H550.5 V798.5" fill="none" stroke="#3f73a3" stroke-width="3"/></svg>
<svg style="left:0;top:0" width="2880" height="1100"><path d="M1200,808.0 H1210.5 V798.5" fill="none" stroke="#3f73a3" stroke-width="3"/></svg>
<div class="t" style="left:560px;top:769.20px;font-size:28px;color:#000;letter-spacing:-0.16px;">Alfresco Content Services</div>
<div class="t" style="left:304.5px;top:831.20px;font-size:28px;color:#bb3f4f;letter-spacing:-0.12px;">*</div>
<div class="t" style="left:325.5px;top:833.20px;font-size:28px;color:#666;letter-spacing:-0.18px;">Connection Type:</div>
<div class="a" style="left:551px;top:821px;width:657px;height:47.5px;border:1.5px solid #c2c2c2;background:#fff"></div>
<div class="t" style="left:561px;top:833.20px;font-size:28px;color:#000;letter-spacing:-0.1px;">G HTTP connection to external server</div>
<svg style="left:0;top:0" width="1300" height="900" fill="none" stroke="#346187"><polyline points="1177.8,842.7 1187.9,852.5 1198,842.7" stroke-width="2"/></svg>
<div class="a" style="left:292px;top:811px;width:926px;height:58px;border:8px solid #ec1c24"></div>
<div class="t" style="left:1021.5px;top:970.20px;font-size:28px;color:#c3dcf3;letter-spacing:-0.12px;">Continue</div>
<div class="t" style="left:1173.5px;top:970.20px;font-size:28px;color:#c3dcf3;letter-spacing:-0.12px;">Cancel</div>
<div class="a" style="left:12px;top:1448px;width:2856px;height:80px;border-radius:4px;background:#4f5b66"></div>
<div class="a" style="left:0;top:1540px;width:2880px;height:2px;background:#25231f"></div>
<div class="a" style="left:96px;top:1540px;width:688px;height:2px;background:#b9b9b9"></div>
<div class="a" style="left:1475px;top:1540px;width:89px;height:2px;background:#5b5a50"></div>
</body></html>
